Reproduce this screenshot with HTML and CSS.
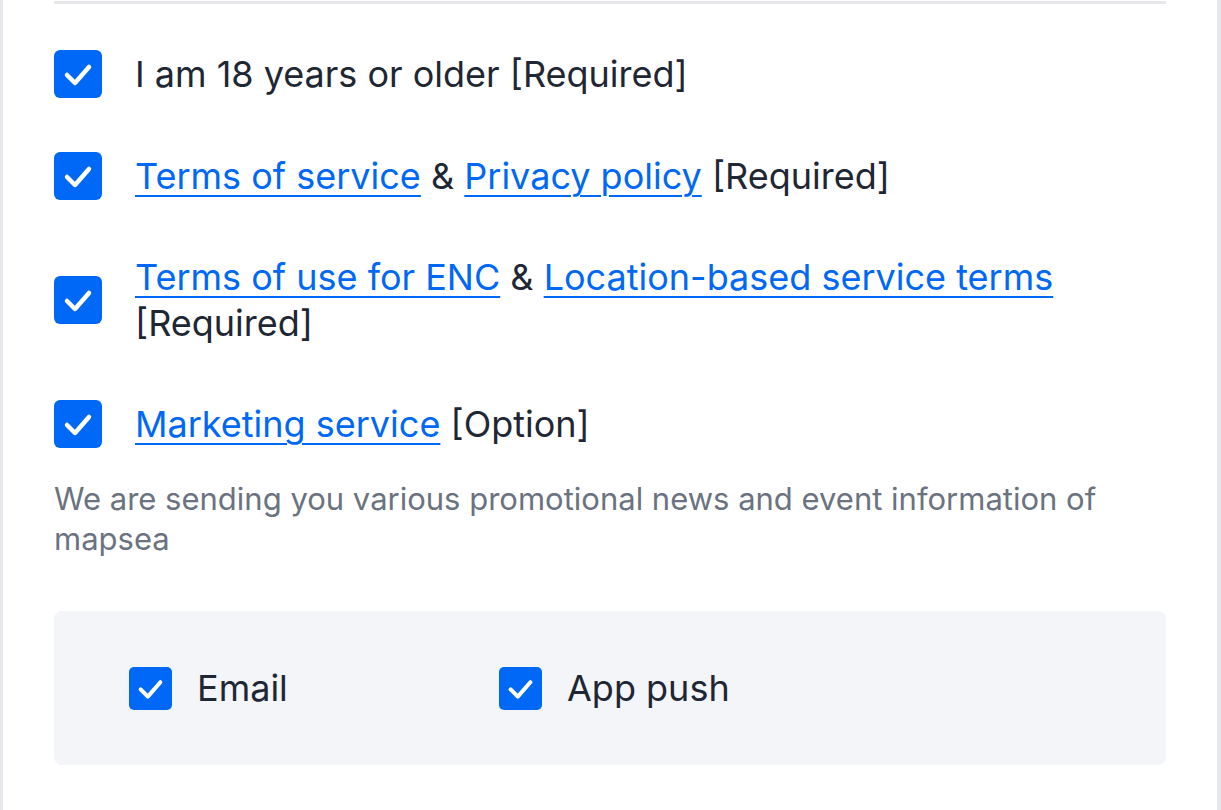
FILE: index.html
```html
<!DOCTYPE html>
<html lang="en">
<head>
<meta charset="utf-8">
<title>Agreements</title>
<link rel="stylesheet" href="styles.css">
</head>
<body>
<div class="panel">
  <div class="divider"></div>
  <ul class="terms">
    <li class="term">
      <span class="check"><svg viewBox="0 0 48 48"><path d="M13 25 L21 33 L35 17"/></svg></span>
      <span class="label">I am 18 years or older [Required]</span>
    </li>
    <li class="term">
      <span class="check"><svg viewBox="0 0 48 48"><path d="M13 25 L21 33 L35 17"/></svg></span>
      <span class="label"><a href="#">Terms of service</a> &amp; <a href="#">Privacy policy</a> [Required]</span>
    </li>
    <li class="term">
      <span class="check"><svg viewBox="0 0 48 48"><path d="M13 25 L21 33 L35 17"/></svg></span>
      <span class="label"><a href="#">Terms of use for ENC</a> &amp; <a href="#">Location-based service terms</a><br>[Required]</span>
    </li>
    <li class="term">
      <span class="check"><svg viewBox="0 0 48 48"><path d="M13 25 L21 33 L35 17"/></svg></span>
      <span class="label"><a href="#">Marketing service</a> [Option]</span>
    </li>
  </ul>
  <p class="note">We are sending you various promotional news and event information of mapsea</p>
  <div class="channels">
    <div class="channel">
      <span class="check small"><svg viewBox="0 0 48 48"><path d="M13 25 L21 33 L35 17"/></svg></span>
      <span class="channel-label">Email</span>
    </div>
    <div class="channel">
      <span class="check small"><svg viewBox="0 0 48 48"><path d="M13 25 L21 33 L35 17"/></svg></span>
      <span class="channel-label">App push</span>
    </div>
  </div>
</div>
</body>
</html>
```

FILE: styles.css
```css
* { box-sizing: border-box; }
html, body { margin: 0; padding: 0; background: #ffffff; }
body {
  font-family: Inter, "Noto Sans", "Liberation Sans", sans-serif;
  color: #1e2733;
}
.panel {
  width: 1221px;
  min-height: 810px;
  border-left: 3px solid #e6e8ee;
  border-right: 4px solid #e6e8ee;
  padding: 1px 51px 40px 51px;
}
.divider {
  height: 3px;
  background: #e5e7eb;
}
.terms {
  list-style: none;
  margin: 46px 0 0 0;
  padding: 0;
  display: flex;
  flex-direction: column;
  gap: 54px;
}
.term {
  display: flex;
  align-items: center;
  gap: 33px;
}
.check {
  flex: none;
  width: 48px;
  height: 48px;
  border-radius: 6px;
  background: #0068f7;
  display: flex;
  align-items: center;
  justify-content: center;
}
.check svg {
  width: 100%;
  height: 100%;
  fill: none;
  stroke: #ffffff;
  stroke-width: 4.5;
  stroke-linecap: round;
  stroke-linejoin: round;
}
.check.small {
  width: 43px;
  height: 43px;
  border-radius: 5px;
}
.label {
  font-size: 36px;
  line-height: 46px;
}
.label a {
  color: #0068f7;
  text-decoration: underline;
  text-decoration-thickness: 2px;
  text-underline-offset: 6px;
}
.note {
  margin: 31px 0 0 0;
  font-size: 31px;
  line-height: 40px;
  color: #6b7280;
}
.channels {
  margin-top: 52px;
  background: #f4f5f9;
  border-radius: 8px;
  height: 154px;
  padding: 0 75px;
  display: flex;
  align-items: center;
}
.channel {
  width: 370px;
  display: flex;
  align-items: center;
  gap: 25px;
}
.channel-label {
  font-size: 36px;
  line-height: 46px;
}
```
